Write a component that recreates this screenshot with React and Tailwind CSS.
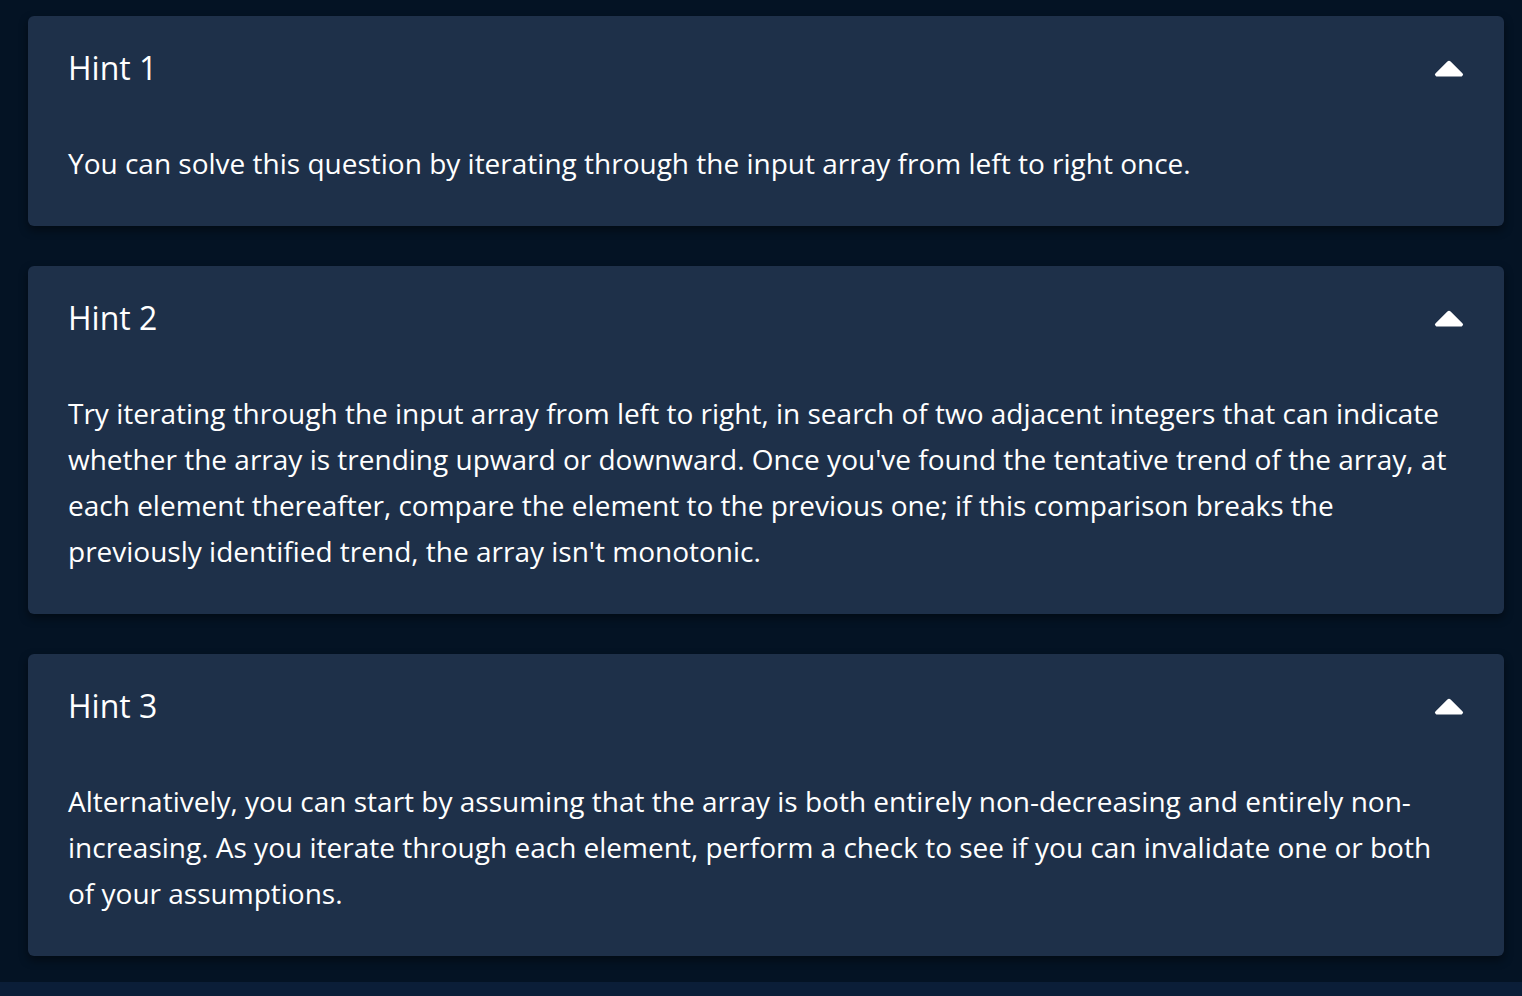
const hints = [
  {
    title: 'Hint 1',
    body: 'You can solve this question by iterating through the input array from left to right once.',
  },
  {
    title: 'Hint 2',
    body: "Try iterating through the input array from left to right, in search of two adjacent integers that can indicate whether the array is trending upward or downward. Once you've found the tentative trend of the array, at each element thereafter, compare the element to the previous one; if this comparison breaks the previously identified trend, the array isn't monotonic.",
  },
  {
    title: 'Hint 3',
    body: 'Alternatively, you can start by assuming that the array is both entirely non-decreasing and entirely non-increasing. As you iterate through each element, perform a check to see if you can invalidate one or both of your assumptions.',
  },
];

function CaretUp() {
  return (
    <svg width="30" height="17" viewBox="0 0 30 17" className="shrink-0">
      <path
        d="M13.4 1.6 Q15 0 16.6 1.6 L28.6 13.6 Q30 15 28 16.2 Q27.6 16.5 27 16.5 L3 16.5 Q2.4 16.5 2 16.2 Q0 15 1.4 13.6 Z"
        fill="#ffffff"
      />
    </svg>
  );
}

function HintCard({ title, body }) {
  return (
    <div className="bg-[#1e3049] rounded-md shadow-[0_4px_10px_rgba(0,0,0,0.45)] px-10 pt-8 pb-10">
      <div className="flex items-center justify-between h-10">
        <h3 className="text-[32px] leading-10 text-white">{title}</h3>
        <CaretUp />
      </div>
      <p className="mt-[52px] text-[28px] leading-[46px] text-white">{body}</p>
    </div>
  );
}

export default function App() {
  return (
    <div className="min-h-screen bg-[#0b1e38]" style={{ fontFamily: '"Open Sans", sans-serif' }}>
      <div className="bg-[#041324] pt-4 pb-[26px] pl-7 pr-[18px] flex flex-col gap-10">
        {hints.map((h) => (
          <HintCard key={h.title} title={h.title} body={h.body} />
        ))}
      </div>
    </div>
  );
}
